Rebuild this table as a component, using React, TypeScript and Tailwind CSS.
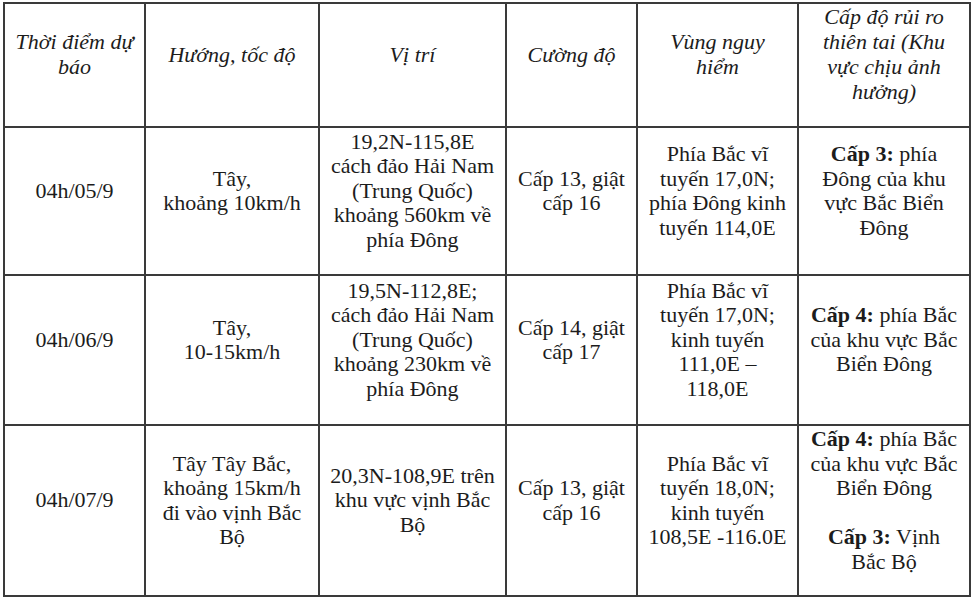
import React from 'react';

type Row = {
  time: string;
  direction: React.ReactNode;
  position: React.ReactNode;
  strength: React.ReactNode;
  danger: React.ReactNode;
  risk: React.ReactNode;
  height: string;
};

const headers: React.ReactNode[] = [
  <>Thời điểm dự<br />báo</>,
  <>Hướng, tốc độ</>,
  <>Vị trí</>,
  <>Cường độ</>,
  <>Vùng nguy<br />hiểm</>,
  <>Cấp độ rủi ro<br />thiên tai (Khu<br />vực chịu ảnh<br />hưởng)</>,
];

const rows: Row[] = [
  {
    time: '04h/05/9',
    direction: <>Tây,<br />khoảng 10km/h</>,
    position: <>19,2N-115,8E<br />cách đảo Hải Nam<br />(Trung Quốc)<br />khoảng 560km về<br />phía Đông</>,
    strength: <>Cấp 13, giật<br />cấp 16</>,
    danger: <>Phía Bắc vĩ<br />tuyến 17,0N;<br />phía Đông kinh<br />tuyến 114,0E</>,
    risk: <><b>Cấp 3:</b> phía<br />Đông của khu<br />vực Bắc Biển<br />Đông</>,
    height: 'h-[148px]',
  },
  {
    time: '04h/06/9',
    direction: <>Tây,<br />10-15km/h</>,
    position: <>19,5N-112,8E;<br />cách đảo Hải Nam<br />(Trung Quốc)<br />khoảng 230km về<br />phía Đông</>,
    strength: <>Cấp 14, giật<br />cấp 17</>,
    danger: <>Phía Bắc vĩ<br />tuyến 17,0N;<br />kinh tuyến<br />111,0E –<br />118,0E</>,
    risk: <><b>Cấp 4:</b> phía Bắc<br />của khu vực Bắc<br />Biển Đông</>,
    height: 'h-[150px]',
  },
  {
    time: '04h/07/9',
    direction: <>Tây Tây Bắc,<br />khoảng 15km/h<br />đi vào vịnh Bắc<br />Bộ</>,
    position: <>20,3N-108,9E trên<br />khu vực vịnh Bắc<br />Bộ</>,
    strength: <>Cấp 13, giật<br />cấp 16</>,
    danger: <>Phía Bắc vĩ<br />tuyến 18,0N;<br />kinh tuyến<br />108,5E -116.0E</>,
    risk: (
      <>
        <b>Cấp 4:</b> phía Bắc<br />của khu vực Bắc<br />Biển Đông<br />
        <span className="block h-[24.5px]" />
        <b>Cấp 3:</b> Vịnh<br />Bắc Bộ
      </>
    ),
    height: 'h-[171px]',
  },
];

const cell = 'border-2 border-[#3a3a3a] px-1 text-center align-middle';

export default function App() {
  return (
    <div className="min-h-screen bg-white pl-[3px] pt-[2px] font-['Liberation_Serif','Times_New_Roman',serif] text-[#1c1c1c]">
      <table className="w-[968px] table-fixed border-collapse">
        <colgroup>
          <col className="w-[141px]" />
          <col className="w-[174px]" />
          <col className="w-[187px]" />
          <col className="w-[131px]" />
          <col className="w-[161px]" />
          <col className="w-[172px]" />
        </colgroup>
        <thead>
          <tr className="h-[123px]">
            {headers.map((h, i) => (
              <th key={i} className={`${cell} pb-[22px] text-[22px] font-normal italic leading-[25px]`}>
                {h}
              </th>
            ))}
          </tr>
        </thead>
        <tbody>
          {rows.map((r) => (
            <tr key={r.time} className={r.height}>
              {[r.time, r.direction, r.position, r.strength, r.danger, r.risk].map((c, i) => (
                <td key={i} className={`${cell} pb-[20px] text-[22px] leading-[24.5px]`}>
                  {c}
                </td>
              ))}
            </tr>
          ))}
        </tbody>
      </table>
    </div>
  );
}
